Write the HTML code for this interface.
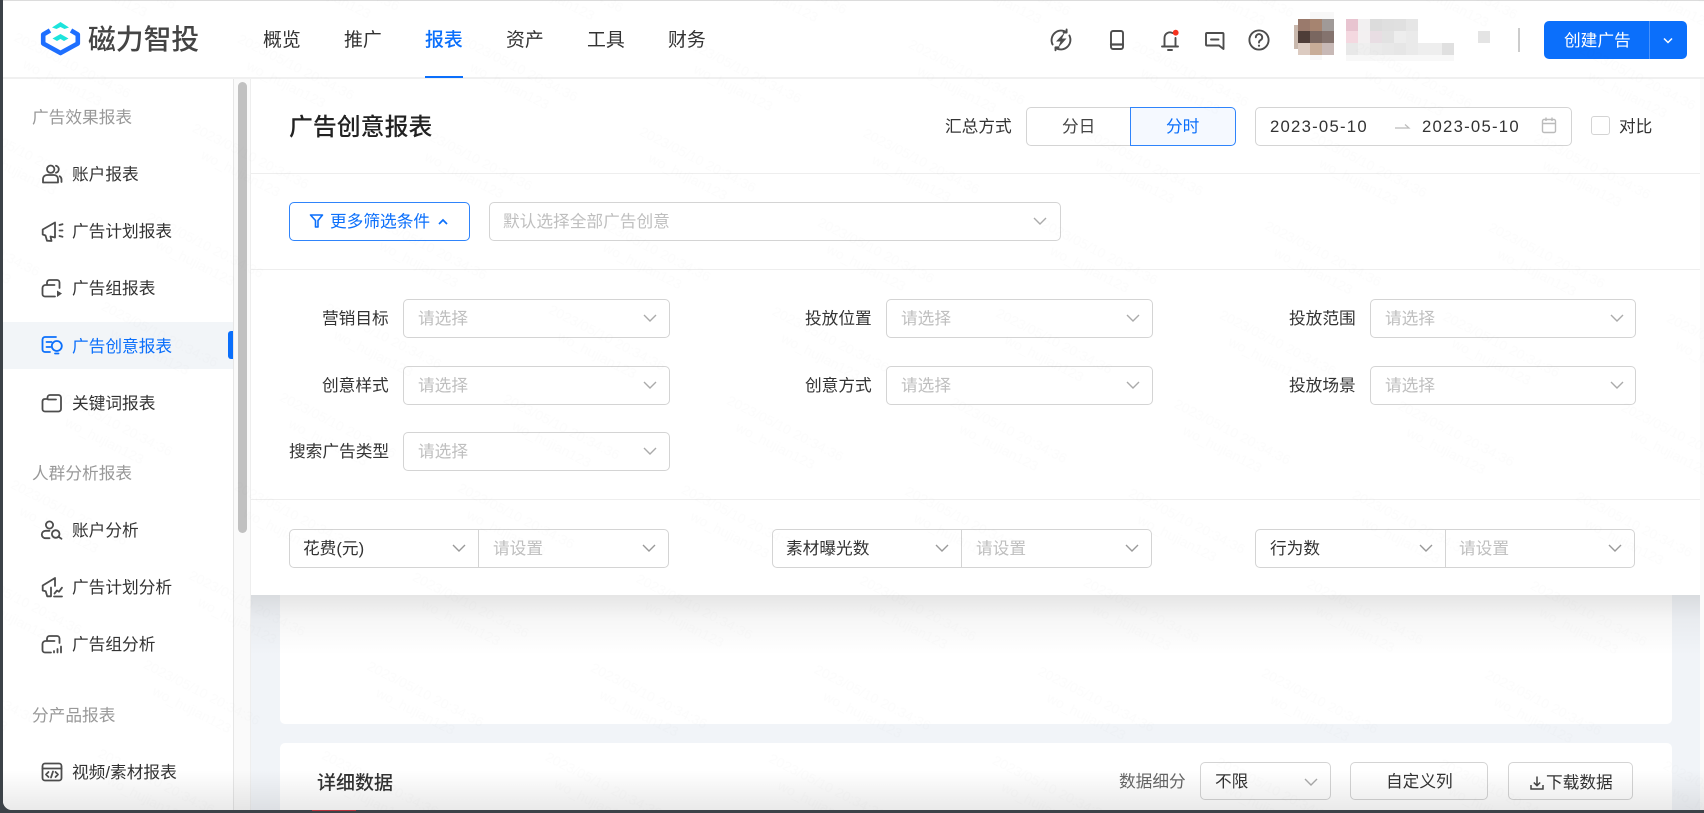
<!DOCTYPE html>
<html lang="zh"><head><meta charset="utf-8"><title>广告创意报表</title>
<style>
html,body{margin:0;padding:0;width:1704px;height:813px;overflow:hidden;background:#3c4248}
*{box-sizing:border-box}
body{font-family:"Liberation Sans","Noto Sans CJK SC",sans-serif;color:#333;font-size:16.7px}
#f{position:absolute;left:3px;top:0;width:1701px;height:810px;background:#fff;border-bottom-left-radius:9px;overflow:hidden}
#p{position:absolute;left:-3px;top:0;width:1704px;height:813px;filter:blur(.3px)}
#p div,#p svg{position:absolute}
.t{white-space:nowrap;line-height:24px;height:24px;transform:translateY(1px)}
.ph{color:#bfbfbf}
.g{color:#999}
.b{border:1px solid #d4d4d4;border-radius:5px;background:#fff}
.s{width:267px;height:39px}
.c{width:380px;height:39px}
.i{width:24px;height:24px;left:40px;fill:none;stroke:#4d4d4d;stroke-width:1.8;stroke-linejoin:round;stroke-linecap:round}
.ch{width:14px;height:8px;fill:none;stroke:#aaa;stroke-width:1.4}
.px{height:12px;width:12px}
</style></head><body>
<div id="f"><div id="p">

<!-- base regions -->
<div style="left:0;top:0;width:1704px;height:1px;background:#dcdcdc"></div>
<div style="left:0;top:1px;width:1704px;height:76px;background:#fff"></div>
<div style="left:0;top:77px;width:1704px;height:2px;background:#f0f0f0"></div>
<div style="left:0;top:79px;width:233px;height:734px;background:#fff"></div>
<div style="left:233px;top:79px;width:18px;height:734px;background:#fafafa;border-left:1px solid #e6e6e6;border-right:1px solid #eeeeee"></div>
<div style="left:238px;top:82px;width:9px;height:451px;background:#c1c1c1;border-radius:5px"></div>
<div style="left:251px;top:79px;width:1449px;height:734px;background:#f1f4f8"></div>
<div style="left:1700px;top:79px;width:4px;height:734px;background:#fafafa"></div>

<!-- cards behind -->
<div style="left:280px;top:560px;width:1392px;height:164px;background:#fff;border-radius:0 0 5px 5px"></div>
<div style="left:280px;top:743px;width:1392px;height:70px;background:#fff;border-radius:5px 5px 0 0"></div>

<!-- header -->
<svg style="left:0;top:0" width="1704" height="79" viewBox="0 0 1704 79">
 <polyline points="50,30.5 43.2,34.5 43.2,43.5 60.5,53 77.8,43.5 77.8,34.5 71,30.5" fill="none" stroke="#1e6fff" stroke-width="4.6" stroke-linejoin="round"/>
 <polygon points="52,27.5 60.5,22 69,27.5 64.5,29 60.5,27 56.5,29" fill="#1de4dc"/>
 <polygon points="52.5,38.5 60.5,34 68.5,38.5 64,41 60.5,39 57,41" fill="#1de4dc"/>
 <g fill="none" stroke="#4d4d4d" stroke-width="1.9" stroke-linecap="round" stroke-linejoin="round">
  <path d="M1052.6 44.5A9.6 9.6 0 0 1 1066.5 32.2M1069.4 35.5A9.6 9.6 0 0 1 1055.5 47.8"/>
  <path d="M1066.6 29.5v3h-3M1055.5 50.3v-3h3"/>
  <rect x="1111" y="31" width="12" height="18" rx="2"/>
  <path d="M1111 44.5h12" stroke-width="2.2"/>
  <path d="M1162 46.5h16M1164.5 46.5V38a5.5 5.5 0 0 1 8-5M1175.5 38v8.5M1168 50h4"/>
  <path d="M1207 33h15.5a1 1 0 0 1 1 1v15l-4.5-3.5h-12a1 1 0 0 1-1-1V34a1 1 0 0 1 1-1z"/>
  <path d="M1211 39.5h7.5"/>
  <circle cx="1259" cy="40" r="9.6"/>
  <path d="M1255.8 37.3a3.2 3.2 0 1 1 4.8 2.8c-1 .6-1.6 1.1-1.6 2.4"/>
 </g>
 <circle cx="1259" cy="45.7" r="1.1" fill="#4d4d4d"/>
 <polygon points="1065,32 1056,41.5 1060.5,41.5 1058,48 1066.5,38.5 1062,38.5" fill="#4d4d4d"/>
 <circle cx="1175.7" cy="32.7" r="2.9" fill="#f5321e"/>
</svg>
<div class="t" style="left:88px;top:21px;height:36px;line-height:36px;font-size:27.8px;color:#444;font-weight:500">磁力智投</div>
<div class="t" style="left:263px;top:28px;font-size:18.9px">概览</div>
<div class="t" style="left:344px;top:28px;font-size:18.9px">推广</div>
<div class="t" style="left:425px;top:28px;font-size:18.9px;color:#0b6ffb;font-weight:500">报表</div>
<div class="t" style="left:506px;top:28px;font-size:18.9px">资产</div>
<div class="t" style="left:587px;top:28px;font-size:18.9px">工具</div>
<div class="t" style="left:668px;top:28px;font-size:18.9px">财务</div>
<div style="left:425px;top:76px;width:38px;height:2px;background:#0b6ffb"></div>

<!-- blurred avatar + name -->
<div style="left:1294px;top:25px;width:4px;height:24px;background:#c9b8ad"></div>
<div style="left:1310px;top:12px;width:24px;height:7px;background:#f8f8f8"></div>
<div style="left:1310px;top:55px;width:12px;height:5px;background:#f8f8f8"></div>
<div style="left:1346px;top:55px;width:108px;height:6px;background:#f8f8f8"></div>
<div class="px" style="left:1298px;top:19px;background:#9a7a6c"></div><div class="px" style="left:1310px;top:19px;background:#a68470"></div><div class="px" style="left:1322px;top:19px;background:#a09a98"></div>
<div class="px" style="left:1298px;top:31px;background:#4e3d38"></div><div class="px" style="left:1310px;top:31px;background:#7a6760"></div><div class="px" style="left:1322px;top:31px;background:#84736e"></div>
<div class="px" style="left:1298px;top:43px;background:#dccbc1"></div><div class="px" style="left:1310px;top:43px;background:#c8ad98"></div><div class="px" style="left:1322px;top:43px;background:#c8b9b6"></div>
<div class="px" style="left:1346px;top:19px;background:#e8c4d0"></div><div class="px" style="left:1358px;top:19px;background:#f2f0f1"></div><div class="px" style="left:1370px;top:19px;background:#dcdcdc"></div><div class="px" style="left:1382px;top:19px;background:#dfdfdf"></div><div class="px" style="left:1394px;top:19px;background:#e0e0e0"></div><div class="px" style="left:1406px;top:19px;background:#e6e6e6"></div>
<div class="px" style="left:1346px;top:31px;background:#f4d8e0"></div><div class="px" style="left:1358px;top:31px;background:#f3f0f1"></div><div class="px" style="left:1370px;top:31px;background:#e8dde3"></div><div class="px" style="left:1382px;top:31px;background:#e2e2e2"></div><div class="px" style="left:1394px;top:31px;background:#ededed"></div><div class="px" style="left:1406px;top:31px;background:#eaeaea"></div>
<div class="px" style="left:1346px;top:43px;background:#e8e8e8"></div><div class="px" style="left:1358px;top:43px;background:#efefef"></div><div class="px" style="left:1370px;top:43px;background:#eaeaea"></div><div class="px" style="left:1382px;top:43px;background:#e8e8e8"></div><div class="px" style="left:1394px;top:43px;background:#e6e6e6"></div><div class="px" style="left:1406px;top:43px;background:#eaeaea"></div><div class="px" style="left:1418px;top:43px;background:#eeeeee"></div><div class="px" style="left:1430px;top:43px;background:#eeeeee"></div><div class="px" style="left:1442px;top:43px;background:#e0e0e0"></div>
<div class="px" style="left:1478px;top:31px;background:#e4e4e4"></div>
<div style="left:1518px;top:28px;width:1.5px;height:24px;background:#ccc"></div>

<div style="left:1544px;top:21px;width:143px;height:38px;background:#0b6ffb;border-radius:5px"></div>
<div style="left:1649px;top:21px;width:1px;height:38px;background:#4a93fc"></div>
<div class="t" style="left:1564px;top:28px;color:#fff">创建广告</div>
<svg class="ch" style="left:1661px;top:37px;stroke:#fff;stroke-width:1.5" viewBox="0 0 14 8"><path d="M3 1.5l4 4 4-4"/></svg>

<!-- sidebar -->
<div class="t g" style="left:32px;top:105px">广告效果报表</div>
<div style="left:3px;top:322px;width:230px;height:47px;background:#f2f5f8"></div>
<div style="left:228px;top:331px;width:5px;height:28px;background:#0b6ffb;border-radius:3px 0 0 3px"></div>

<svg class="i" style="top:162px" viewBox="0 0 24 24"><circle cx="10.7" cy="7.2" r="3.7"/><path d="M3 20.5v-3.5a4 4 0 0 1 4-4h7a4 4 0 0 1 4 4v3.5zM16 3.8a3.6 3.6 0 0 1 0 7M21.5 20v-2.5a4 4 0 0 0-1.8-3.3"/></svg>
<div class="t" style="left:72px;top:162px">账户报表</div>

<svg class="i" style="top:219px" viewBox="0 0 24 24"><path d="M2.7 10.5L15 3.5V18.5L10.5 17.5 11.5 22 7 21.7 5.5 16.500 2.7 15.5zM19.5 6l3-.8M19.5 11.5h3M19.5 17l3 .8"/></svg>
<div class="t" style="left:72px;top:219px">广告计划报表</div>

<svg class="i" style="top:276px" viewBox="0 0 24 24"><path d="M7 9V6.5A2.5 2.5 0 0 1 9.5 4H17a2.5 2.5 0 0 1 2.5 2.5V12M2.5 12a3 3 0 0 1 3-3h9M2.5 12v6A2.5 2.5 0 0 0 5 20.5h10"/><path d="M17 14.5l5 3-5 3.5z" fill="#4d4d4d" stroke="none"/></svg>
<div class="t" style="left:72px;top:276px">广告组报表</div>

<svg class="i" style="top:334px;stroke:#0b6ffb" viewBox="0 0 24 24"><path d="M16 3H5a2.5 2.5 0 0 0-2.5 2.5v10A2.5 2.5 0 0 0 5 18h5M6.5 8h5M6.5 13h4"/><circle cx="16.8" cy="12" r="5"/><path d="M15 19.5h3.5"/></svg>
<div class="t" style="left:72px;top:334px;color:#0b6ffb">广告创意报表</div>

<svg class="i" style="top:391px" viewBox="0 0 24 24"><path d="M2.5 10v8A2.5 2.5 0 0 0 5 20.5h13.5A2.5 2.5 0 0 0 21 18V6.5A2.5 2.5 0 0 0 18.5 4H10a2.5 2.5 0 0 0-2.5 2.5V8H5A2.5 2.5 0 0 0 2.5 10zM8 8.5h8"/></svg>
<div class="t" style="left:72px;top:391px">关键词报表</div>

<div class="t g" style="left:32px;top:461px">人群分析报表</div>

<svg class="i" style="top:518px" viewBox="0 0 24 24"><circle cx="9.5" cy="7" r="3.6"/><path d="M9.5 12.8h-4a3.7 3.7 0 0 0 0 7.4h4"/><circle cx="15.7" cy="16" r="3.8"/><path d="M18.5 18.8l3 2"/></svg>
<div class="t" style="left:72px;top:518px">账户分析</div>

<svg class="i" style="top:575px" viewBox="0 0 24 24"><path d="M2.7 10.5L15 3V11M2.7 10.5v5l3 .8 1.5 5H11V12.5M14 21.5h8M14.5 18.5l2.5-3 2 1.2 3-4"/></svg>
<div class="t" style="left:72px;top:575px">广告计划分析</div>

<svg class="i" style="top:632px" viewBox="0 0 24 24"><path d="M7 9V6.5A2.5 2.5 0 0 1 9.5 4H17a2.5 2.5 0 0 1 2.5 2.5V11M2.5 12a3 3 0 0 1 3-3h9M2.5 12v6A2.5 2.5 0 0 0 5 20.5h6M14 20.5v-1.500M17.5 20.5v-3.5M21 20.5v-6"/></svg>
<div class="t" style="left:72px;top:632px">广告组分析</div>

<div class="t g" style="left:32px;top:703px">分产品报表</div>

<svg class="i" style="top:760px" viewBox="0 0 24 24"><rect x="2.5" y="3.5" width="19" height="17" rx="2.5"/><path d="M2.5 8.5h19M8.5 12l-2.5 2.5 2.5 2.5M15.5 12l2.5 2.5-2.5 2.5M13 11.5l-2 6"/></svg>
<div class="t" style="left:72px;top:760px">视频/素材报表</div>

<!-- bottom card content -->
<div class="t" style="left:317px;top:771px;font-size:19px;font-weight:500">详细数据</div>
<div class="t" style="left:1119px;top:769px;color:#666">数据细分</div>
<div class="b" style="left:1200px;top:762px;width:131px;height:38px"></div>
<div class="t" style="left:1215px;top:769px">不限</div>
<svg class="ch" style="left:1304px;top:778px" viewBox="0 0 14 8"><path d="M1 1l6 6 6-6"/></svg>
<div class="b" style="left:1350px;top:762px;width:138px;height:38px"></div>
<div class="t" style="left:1386px;top:769px">自定义列</div>
<div class="b" style="left:1508px;top:762px;width:125px;height:38px"></div>
<svg style="left:1529px;top:775px;fill:none;stroke:#444;stroke-width:1.5" width="16" height="16" viewBox="0 0 16 16"><path d="M8 1.5v9M4.8 7.5L8 10.7l3.2-3.2M2 10v4h12v-4"/></svg>
<div class="t" style="left:1546px;top:770px">下载数据</div>

<!-- dropdown panel -->
<div style="left:251px;top:595px;width:1449px;height:60px;background:linear-gradient(to bottom,rgba(0,0,0,.1),rgba(0,0,0,.035) 40%,rgba(0,0,0,0))"></div>
<div style="left:251px;top:79px;width:1449px;height:516px;background:#fff"></div>
<div style="left:251px;top:173px;width:1449px;height:1px;background:#eeeeee"></div>
<div style="left:251px;top:269px;width:1449px;height:1px;background:#eeeeee"></div>
<div style="left:251px;top:499px;width:1449px;height:1px;background:#eeeeee"></div>

<div class="t" style="left:289px;top:115px;font-size:23.9px;font-weight:500;color:#222;line-height:24px">广告创意报表</div>
<div class="t" style="left:945px;top:114px">汇总方式</div>
<div class="b" style="left:1026px;top:107px;width:106px;height:39px;border-radius:5px 0 0 5px"></div>
<div class="t" style="left:1062px;top:114px;color:#444">分日</div>
<div style="left:1130px;top:107px;width:106px;height:39px;border:1.5px solid #2f84fb;background:#f5f9ff;border-radius:0 5px 5px 0"></div>
<div class="t" style="left:1166px;top:114px;color:#0b6ffb">分时</div>
<div class="b" style="left:1255px;top:107px;width:317px;height:39px"></div>
<div class="t" style="left:1270px;top:114px;letter-spacing:1.25px">2023-05-10</div>
<svg style="left:1394px;top:122px;fill:none;stroke:#bbb;stroke-width:1.2" width="17" height="8" viewBox="0 0 17 8"><path d="M1 6h14L11 2.5"/></svg>
<div class="t" style="left:1422px;top:114px;letter-spacing:1.25px">2023-05-10</div>
<svg style="left:1541px;top:116px;fill:none;stroke:#bbb;stroke-width:1.4" width="16" height="20" viewBox="0 0 16 20"><rect x="1.5" y="3.5" width="13" height="13" rx="1.5"/><path d="M1.5 7.5h13M5 1.5v3.5M11 1.5v3.5"/></svg>
<div class="b" style="left:1591px;top:116px;width:19px;height:19px;border-radius:3px"></div>
<div class="t" style="left:1619px;top:114px">对比</div>

<div style="left:289px;top:202px;width:181px;height:38.5px;border:1.5px solid #2f84fb;border-radius:5px;background:#fff"></div>
<svg style="left:309px;top:213px;fill:none;stroke:#0b6ffb;stroke-width:1.6;stroke-linejoin:round" width="15" height="16" viewBox="0 0 15 16"><path d="M1.5 2h12L9 7.5V14H6.5V7.5z"/></svg>
<div class="t" style="left:330px;top:209px;color:#0b6ffb">更多筛选条件</div>
<svg class="ch" style="left:436px;top:218px;stroke:#0b6ffb;stroke-width:1.7" viewBox="0 0 14 8"><path d="M3 6l4-4 4 4"/></svg>
<div class="b" style="left:489px;top:202px;width:572px;height:38.5px"></div>
<div class="t ph" style="left:503px;top:209px">默认选择全部广告创意</div>
<svg class="ch" style="left:1033px;top:217px" viewBox="0 0 14 8"><path d="M1 1l6 6 6-6"/></svg>

<!-- filter rows -->
<div class="t" style="left:322px;top:306px">营销目标</div>
<div class="b s" style="left:403px;top:299px"></div><div class="t ph" style="left:418px;top:306px">请选择</div>
<svg class="ch" style="left:643px;top:314px" viewBox="0 0 14 8"><path d="M1 1l6 6 6-6"/></svg>
<div class="t" style="left:805px;top:306px">投放位置</div>
<div class="b s" style="left:886px;top:299px"></div><div class="t ph" style="left:901px;top:306px">请选择</div>
<svg class="ch" style="left:1126px;top:314px" viewBox="0 0 14 8"><path d="M1 1l6 6 6-6"/></svg>
<div class="t" style="left:1289px;top:306px">投放范围</div>
<div class="b s" style="left:1370px;top:299px;width:266px"></div><div class="t ph" style="left:1385px;top:306px">请选择</div>
<svg class="ch" style="left:1610px;top:314px" viewBox="0 0 14 8"><path d="M1 1l6 6 6-6"/></svg>

<div class="t" style="left:322px;top:373px">创意样式</div>
<div class="b s" style="left:403px;top:365.5px"></div><div class="t ph" style="left:418px;top:373px">请选择</div>
<svg class="ch" style="left:643px;top:381px" viewBox="0 0 14 8"><path d="M1 1l6 6 6-6"/></svg>
<div class="t" style="left:805px;top:373px">创意方式</div>
<div class="b s" style="left:886px;top:365.5px"></div><div class="t ph" style="left:901px;top:373px">请选择</div>
<svg class="ch" style="left:1126px;top:381px" viewBox="0 0 14 8"><path d="M1 1l6 6 6-6"/></svg>
<div class="t" style="left:1289px;top:373px">投放场景</div>
<div class="b s" style="left:1370px;top:365.5px;width:266px"></div><div class="t ph" style="left:1385px;top:373px">请选择</div>
<svg class="ch" style="left:1610px;top:381px" viewBox="0 0 14 8"><path d="M1 1l6 6 6-6"/></svg>

<div class="t" style="left:289px;top:439px">搜索广告类型</div>
<div class="b s" style="left:403px;top:432px"></div><div class="t ph" style="left:418px;top:439px">请选择</div>
<svg class="ch" style="left:643px;top:447px" viewBox="0 0 14 8"><path d="M1 1l6 6 6-6"/></svg>

<!-- metric combos -->
<div class="b c" style="left:289px;top:529px"></div>
<div style="left:478px;top:529px;width:1px;height:39px;background:#d4d4d4"></div>
<div class="t" style="left:303px;top:536px">花费(元)</div>
<svg class="ch" style="left:452px;top:544px;stroke:#999" viewBox="0 0 14 8"><path d="M1 1l6 6 6-6"/></svg>
<div class="t ph" style="left:493px;top:536px">请设置</div>
<svg class="ch" style="left:642px;top:544px;stroke:#999" viewBox="0 0 14 8"><path d="M1 1l6 6 6-6"/></svg>

<div class="b c" style="left:772px;top:529px"></div>
<div style="left:961px;top:529px;width:1px;height:39px;background:#d4d4d4"></div>
<div class="t" style="left:786px;top:536px">素材曝光数</div>
<svg class="ch" style="left:935px;top:544px;stroke:#999" viewBox="0 0 14 8"><path d="M1 1l6 6 6-6"/></svg>
<div class="t ph" style="left:976px;top:536px">请设置</div>
<svg class="ch" style="left:1125px;top:544px;stroke:#999" viewBox="0 0 14 8"><path d="M1 1l6 6 6-6"/></svg>

<div class="b c" style="left:1255px;top:529px"></div>
<div style="left:1445px;top:529px;width:1px;height:39px;background:#d4d4d4"></div>
<div class="t" style="left:1270px;top:536px">行为数</div>
<svg class="ch" style="left:1419px;top:544px;stroke:#999" viewBox="0 0 14 8"><path d="M1 1l6 6 6-6"/></svg>
<div class="t ph" style="left:1459px;top:536px">请设置</div>
<svg class="ch" style="left:1608px;top:544px;stroke:#999" viewBox="0 0 14 8"><path d="M1 1l6 6 6-6"/></svg>

<!-- watermark -->
<svg style="left:0;top:0;pointer-events:none" width="1704" height="813">
 <defs><pattern id="wm" width="200" height="100" patternUnits="userSpaceOnUse" patternTransform="rotate(27)">
  <text x="30" y="30" font-family="Liberation Sans" font-size="14" fill="#000" fill-opacity=".012">2023/05/10 20:34:36</text>
  <text x="50" y="50" font-family="Liberation Sans" font-size="14" fill="#000" fill-opacity=".012">wo_hujian123</text>
 </pattern></defs>
 <rect width="1704" height="813" fill="url(#wm)"/>
</svg>

<!-- bottom window shade -->
<div style="left:0;top:770px;width:1704px;height:43px;background:linear-gradient(to bottom,rgba(0,0,0,0),rgba(0,0,0,.09));pointer-events:none"></div>
</div></div>
<div style="position:absolute;left:312px;top:810px;width:44px;height:1px;background:#b8323c"></div>
</body></html>
